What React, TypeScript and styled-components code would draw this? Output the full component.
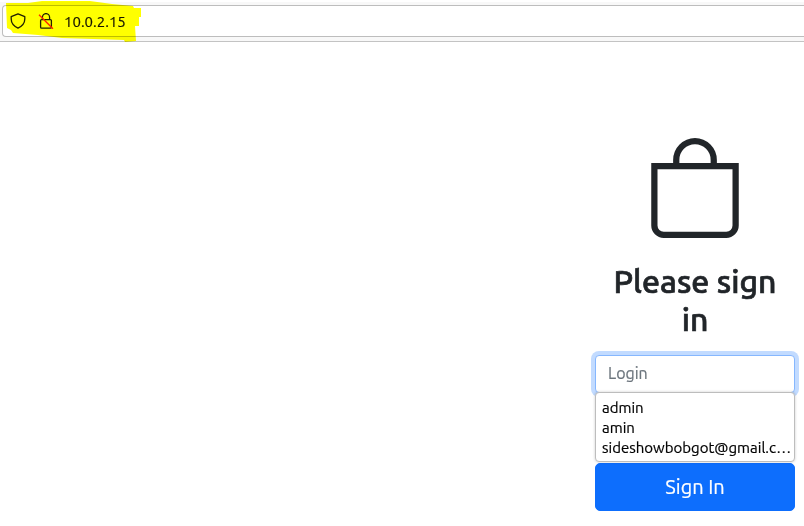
import React from "react";
import styled, { createGlobalStyle } from "styled-components";

const GlobalStyle = createGlobalStyle`
  *, *::before, *::after { box-sizing: border-box; }
  body {
    margin: 0;
    background: #fff;
    color: #212529;
    font-family: Ubuntu, "Noto Sans", sans-serif;
    overflow-x: hidden;
  }
`;

const Toolbar = styled.header`
  position: relative;
  padding: 3px 0 4px 2px;
  border-top: 2px solid #fff;
  border-bottom: 1px solid #c3c3c3;
  background: #f8f8f8;
`;

const AddressBar = styled.div`
  display: flex;
  align-items: center;
  height: 32px;
  padding-left: 7px;
  border: 1px solid #bdbdbd;
  border-right: 0;
  border-radius: 4px 0 0 4px;
  background: #fff;
`;

const BarIcon = styled.svg<{ $gap: number }>`
  flex: none;
  width: 16px;
  height: 16px;
  margin-right: ${({ $gap }) => $gap}px;
`;

const AddressInput = styled.input`
  flex: 1;
  min-width: 0;
  padding: 2px 0 0;
  border: 0;
  outline: 0;
  background: transparent;
  color: #15141a;
  font: 15px/20px Ubuntu, "Noto Sans", sans-serif;
  -webkit-text-stroke: 0.2px;
`;

const Highlight = styled.svg`
  position: absolute;
  top: -2px;
  left: 0;
  width: 144px;
  height: 44px;
  mix-blend-mode: multiply;
  pointer-events: none;
`;

const Main = styled.main`
  display: flex;
  justify-content: flex-end;
  padding: 96px 9px 15px;
`;

const SignInForm = styled.form`
  display: flex;
  flex-direction: column;
  align-items: center;
  width: 200px;
`;

const BagIcon = styled.svg`
  width: 100px;
  height: 100px;
`;

const Title = styled.h1`
  margin: 24px 0 17px;
  padding: 0 8px;
  font-size: 32px;
  font-weight: 500;
  line-height: 38px;
  text-align: center;
  -webkit-text-stroke: 0.7px;
`;

const Field = styled.div`
  width: 100%;
`;

const LoginInput = styled.input`
  display: block;
  width: 100%;
  height: 38px;
  padding: 5px 12px 7px;
  border: 1px solid #86b7fe;
  border-radius: 4px;
  outline: 0;
  box-shadow: 0 0 0 4px #c2dbff;
  background: #fff;
  color: #212529;
  font: 16px/24px Ubuntu, "Noto Sans", sans-serif;
  &::placeholder {
    color: #6c757d;
    opacity: 1;
    -webkit-text-stroke: 0.2px;
  }
`;

const Suggestions = styled.ul`
  position: relative;
  margin: -1px 0 1px;
  padding: 5px 2px 3px 6px;
  border: 1px solid #bdbdbd;
  border-radius: 4px;
  background: #fff;
  box-shadow: 0 0 3px rgba(0, 0, 0, 0.2);
  list-style: none;
`;

const Suggestion = styled.li`
  overflow: hidden;
  color: #000;
  font-size: 15px;
  line-height: 20px;
  text-overflow: ellipsis;
  white-space: nowrap;
  -webkit-text-stroke: 0.2px;
`;

const SubmitButton = styled.button`
  width: 100%;
  height: 48px;
  padding: 8px 16px;
  border: 1px solid #0d6efd;
  border-radius: 5px;
  background: #0d6efd;
  color: #fff;
  font: 20px/30px Ubuntu, "Noto Sans", sans-serif;
  -webkit-text-stroke: 0.2px;
`;

const logins = ["admin", "amin", "sideshowbobgot@gmail.c…"];

export default function App() {
  return (
    <>
      <GlobalStyle />
      <Toolbar>
        <AddressBar>
          <BarIcon $gap={12} viewBox="0 0 16 16" fill="none" stroke="#222" strokeWidth="1.3" strokeLinejoin="round" aria-hidden="true">
            <path d="M8 .8 14.8 3.6V6c0 4.3-2.8 7.2-6.8 9.2C4 13.2 1.2 10.3 1.2 6V3.6Z" />
          </BarIcon>
          <BarIcon $gap={10} viewBox="0 0 16 16" fill="none" stroke="#222" strokeWidth="1.3" aria-hidden="true">
            <path d="M4.4 6.600V4.200a3.600 3.600 0 0 1 7.200 0V6.600M3.600 6.600h8.800a1 1 0 0 1 1 1v6.600a1 1 0 0 1-1 1H3.600a1 1 0 0 1-1-1V7.600a1 1 0 0 1 1-1Z" />
            <path d="m1 1.800 14 14" stroke="#f22" />
          </BarIcon>
          <AddressInput aria-label="Address" defaultValue="10.0.2.15" />
        </AddressBar>
        <Highlight viewBox="0 0 144 44" aria-hidden="true">
          <path fill="#ff0" d="M6 3H28L42 1H90L112 4L133 6L134 8H141V17H139V26H135L136 41L125 42L124 40L62 38L38 35L13 33L11 30L7 28Z" />
        </Highlight>
      </Toolbar>
      <Main>
        <SignInForm onSubmit={(event) => event.preventDefault()}>
          <BagIcon viewBox="0 0 16 16" fill="#212529" aria-hidden="true">
            <path d="M8 1a2.5 2.5 0 0 1 2.5 2.5V4h-5v-.5A2.5 2.5 0 0 1 8 1zm3.5 3v-.5a3.5 3.5 0 1 0-7 0V4H1v10a2 2 0 0 0 2 2h10a2 2 0 0 0 2-2V4h-3.5zM2 5h12v9a1 1 0 0 1-1 1H3a1 1 0 0 1-1-1V5z" />
          </BagIcon>
          <Title>Please sign in</Title>
          <Field>
            <LoginInput type="text" name="login" placeholder="Login" aria-label="Login" autoComplete="off" />
            <Suggestions aria-label="Saved logins">
              {logins.map((login) => (
                <Suggestion key={login}>{login}</Suggestion>
              ))}
            </Suggestions>
          </Field>
          <SubmitButton type="submit">Sign In</SubmitButton>
        </SignInForm>
      </Main>
    </>
  );
}
